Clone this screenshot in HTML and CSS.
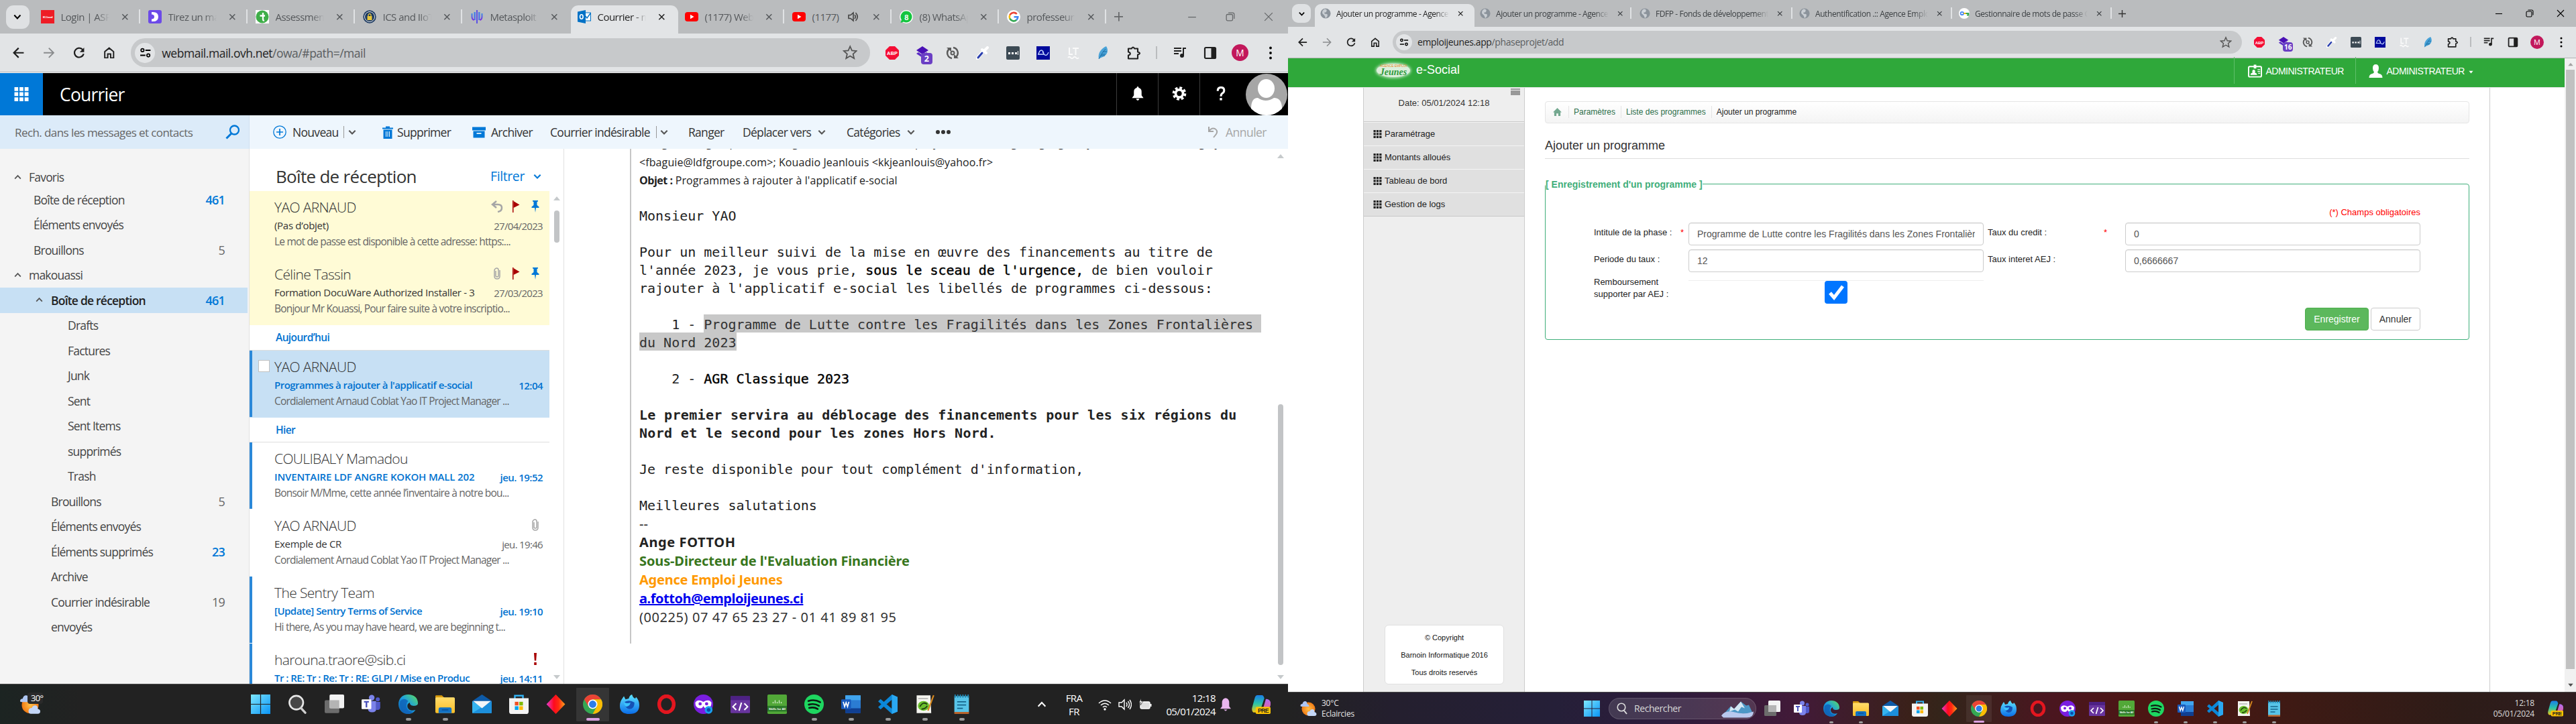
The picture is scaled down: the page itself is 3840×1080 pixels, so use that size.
FILE: index.html
```html
<!DOCTYPE html>
<html lang="fr">
<head>
<meta charset="utf-8">
<title>Courrier / e-Social</title>
<link rel="stylesheet" href="styles.css">
</head>
<body>
<svg class="defs" width="0" height="0">
<defs>
<linearGradient id="gWin" x1="0" y1="0" x2="1" y2="1"><stop offset="0" stop-color="#7ee8ff"/><stop offset="1" stop-color="#0a94f5"/></linearGradient>
<linearGradient id="gDia"><stop offset="0" stop-color="#e63bd0"/><stop offset=".4" stop-color="#ff0a1e"/><stop offset=".65" stop-color="#ff2a10"/><stop offset="1" stop-color="#ffa51e"/></linearGradient>
<linearGradient id="gEdge" x1="0" y1="1" x2="1" y2="0"><stop offset="0" stop-color="#0c59a4"/><stop offset=".5" stop-color="#1b9de2"/><stop offset="1" stop-color="#5fe05a"/></linearGradient>
<linearGradient id="gFold" x1="0" y1="0" x2="0" y2="1"><stop offset="0" stop-color="#ffdc6b"/><stop offset="1" stop-color="#fbbd26"/></linearGradient>
<linearGradient id="gFox" x1="0" y1="0" x2="0" y2="1"><stop offset="0" stop-color="#5fe6ff"/><stop offset="1" stop-color="#0a6ce8"/></linearGradient>
<linearGradient id="gCop" x1="0" y1="0" x2="0" y2="1"><stop offset="0" stop-color="#1b7ee8"/><stop offset=".5" stop-color="#2bc4a8"/><stop offset="1" stop-color="#f2c811"/></linearGradient>
<linearGradient id="gCop2" x1="0" y1="0" x2="0" y2="1"><stop offset="0" stop-color="#b06cf5"/><stop offset="1" stop-color="#f2607a"/></linearGradient>
<linearGradient id="gMeta" x1="0" y1="0" x2="0" y2="1"><stop offset="0" stop-color="#2aa5e8"/><stop offset="1" stop-color="#7a2be0"/></linearGradient>
<radialGradient id="gSun"><stop offset="0" stop-color="#ffc04a"/><stop offset="1" stop-color="#f07a14"/></radialGradient>
</defs>
<symbol id="chev" viewBox="0 0 12 12"><path d="M2 4l4 4.200L10 4" fill="none" stroke="currentColor" stroke-width="1.800"/></symbol>
<symbol id="up" viewBox="0 0 12 12"><path d="M2 8l4-4.200L10 8" fill="none" stroke="currentColor" stroke-width="1.600"/></symbol>
<symbol id="x" viewBox="0 0 12 12"><path d="M1.500 1.500l9 9M10.500 1.500l-9 9" fill="none" stroke="currentColor" stroke-width="1.700"/></symbol>
<symbol id="winx" viewBox="0 0 12 12"><path d="M1 1l10 10M11 1L1 11" fill="none" stroke="currentColor" stroke-width="1.100"/></symbol>
<symbol id="winmin" viewBox="0 0 12 12"><path d="M1 6.500h10" stroke="currentColor" stroke-width="1.100"/></symbol>
<symbol id="winmax" viewBox="0 0 12 12"><path d="M1 4.500Q1 3 2.500 3H7.500Q9 3 9 4.500V9.500Q9 11 7.500 11H2.500Q1 11 1 9.500zM3.500 1H9Q11 1 11 3V8.500" fill="none" stroke="currentColor" stroke-width="1.100"/></symbol>
<symbol id="plus" viewBox="0 0 12 12"><path d="M6 0v12M0 6h12" stroke="currentColor" stroke-width="1.500"/></symbol>
<symbol id="back" viewBox="0 0 16 16"><path d="M15 8H2M8 1.500L1.500 8 8 14.500" fill="none" stroke="currentColor" stroke-width="2"/></symbol>
<symbol id="fwd" viewBox="0 0 16 16"><path d="M1 8h13M8 1.500L14.500 8 8 14.500" fill="none" stroke="currentColor" stroke-width="1.700"/></symbol>
<symbol id="reload" viewBox="0 0 16 16"><path d="M13.500 4.500A6.300 6.300 0 1 0 14.300 9.300" fill="none" stroke="currentColor" stroke-width="2"/><path d="M15 1v6H9z" fill="currentColor"/></symbol>
<symbol id="home" viewBox="0 0 16 16"><path d="M2 6.500L8 1.500l6 5V15H10V9.500H6V15H2z" fill="none" stroke="currentColor" stroke-width="1.800"/></symbol>
<symbol id="tune" viewBox="0 0 16 16"><circle cx="4" cy="4.500" r="2" fill="none" stroke="currentColor" stroke-width="1.600"/><path d="M8 4.500h7M1 11.500h7" stroke="currentColor" stroke-width="1.800"/><circle cx="12" cy="11.500" r="2" fill="none" stroke="currentColor" stroke-width="1.600"/></symbol>
<symbol id="star" viewBox="0 0 20 20"><path d="M10 2l2.400 5.500 6 .5-4.500 4 1.400 5.900L10 14.700 4.700 17.900 6.100 12 1.600 8l6-.5z" fill="none" stroke="currentColor" stroke-width="1.600"/></symbol>
<symbol id="abp" viewBox="0 0 20 20"><path d="M6 0h8l6 6v8l-6 6H6l-6-6V6z" fill="#f40d34"/><text x="10" y="13.300" class="abp-t">ABP</text></symbol>
<symbol id="layers" viewBox="0 0 20 20"><path d="M10 0l9 6-9 6-9-6z" fill="#4a10b5"/><path d="M1 11l9 6 9-6-3-2-6 4-6-4z" fill="#5a2cc5"/></symbol>
<symbol id="sync" viewBox="0 0 20 20"><path d="M9 18A8 8 0 0 1 5 4M11 2a8 8 0 0 1 4 14" fill="none" stroke="#5a5a5a" stroke-width="2.400"/><path d="M1 2h7v6zM19 18h-7v-6z" fill="#5a5a5a"/><circle cx="10" cy="10" r="2.500" fill="none" stroke="#5a5a5a" stroke-width="2"/></symbol>
<symbol id="dropper" viewBox="0 0 20 20"><path d="M2 18l9-11" stroke="#fff" stroke-width="5" stroke-linecap="round"/><path d="M3 17l6-7" stroke="#2a3fae" stroke-width="3" stroke-linecap="round"/><path d="M9 5l6 5M12 7l5-5" stroke="#fff" stroke-width="4" stroke-linecap="round"/></symbol>
<symbol id="dots3" viewBox="0 0 20 20"><rect width="20" height="20" rx="2" fill="#3c4a54"/><path d="M3 9h3v3H3zM8 9h3v3H8zM13 9h3v3h-3zM17 7h1v6h-1z" fill="#fff"/></symbol>
<symbol id="wave" viewBox="0 0 20 20"><rect width="20" height="20" fill="#000a9c"/><path d="M2 12h9c-1-8-6-8-8 0M9 8c3 6 6 8 9 1" fill="none" stroke="#c8d8ff" stroke-width="1.300"/></symbol>
<symbol id="lt" viewBox="0 0 20 20"><path d="M4 2v10h5M9 3h9M13.500 3v10M2 17q2-2.500 4 0t4 0 4 0 4 0" fill="none" stroke="#fafafa" stroke-width="2"/></symbol>
<symbol id="feather" viewBox="0 0 20 20"><path d="M3 19C1 10 7 3 14 0c4 6 2 13-5 16-2 1-4 1-6 3z" fill="#4aa3d8"/><path d="M3 19Q8 9 13 4M7 12h6M6 14h6M9 8h6" stroke="#1d6ea5" stroke-width="1" fill="none"/></symbol>
<symbol id="puzzle" viewBox="0 0 20 20"><path d="M2 3.500h5q.5-2 2-2t2 2h5v5q3 .5 3 2t-3 2v6H2v-5q2.800-.5 2.800-2.500T2 8.500z" fill="none" stroke="#1f1f1f" stroke-width="2.100" stroke-linejoin="round"/></symbol>
<symbol id="queue" viewBox="0 0 20 20"><path d="M1 3h11M1 7h11M1 11h7" stroke="#1f1f1f" stroke-width="2"/><path d="M15 14V3h4" fill="none" stroke="#1f1f1f" stroke-width="2"/><circle cx="13" cy="14" r="3" fill="#1f1f1f"/></symbol>
<symbol id="panel" viewBox="0 0 20 20"><rect x="2" y="2" width="16" height="16" rx="1.500" fill="none" stroke="#1f1f1f" stroke-width="2.200"/><path d="M11.500 2H18v16h-6.500z" fill="#1f1f1f"/></symbol>
<symbol id="kebab" viewBox="0 0 20 20"><circle cx="10" cy="2.500" r="1.900"/><circle cx="10" cy="10" r="1.900"/><circle cx="10" cy="17.500" r="1.900"/></symbol>
<!-- favicons -->
<symbol id="f-ec" viewBox="0 0 20 20"><rect width="20" height="20" fill="#ee1c25"/><text x="10" y="12" class="ec-t">EC-Council</text></symbol>
<symbol id="f-d" viewBox="0 0 20 20"><rect width="20" height="20" rx="3" fill="#6c4ae8"/><path d="M5 3q10-1 10 7T5 17v-3.500q4 0 4-3.500T5 6.500z" fill="#fff"/></symbol>
<symbol id="f-t" viewBox="0 0 20 20"><rect width="20" height="20" fill="#fff"/><circle cx="10" cy="10" r="9.500" fill="#3fae49"/><path d="M11 4v10q0 2 2 1.500M6.500 8.500H14" fill="none" stroke="#fff" stroke-width="2.300"/></symbol>
<symbol id="f-ics" viewBox="0 0 20 20"><circle cx="10" cy="10" r="9.700" fill="#1c3a63"/><circle cx="10" cy="10" r="7.500" fill="none" stroke="#e8e8e8" stroke-width="1"/><rect x="6.500" y="9" width="7" height="6" fill="#e8c63a"/><path d="M8 9V7q2-3 4 0v2" fill="none" stroke="#e8c63a" stroke-width="1.300"/></symbol>
<symbol id="f-meta" viewBox="0 0 20 20"><path d="M6.500 3v12M13.500 3v12M2.500 5v5q0 4 3 5M17.500 5v5q0 4-3 5" fill="none" stroke="url(#gMeta)" stroke-width="2"/><path d="M6 3h1.800v12H6zM12.200 3H14v12h-1.800z" fill="#4a7be5"/><path d="M9 0h2v20H9z" fill="#5a50e5"/></symbol>
<symbol id="f-owa" viewBox="0 0 20 20"><path d="M10 4h9.500v12H10z" fill="#fff" stroke="#0072c6" stroke-width="1.200"/><path d="M11 8l3 4 5-7" fill="none" stroke="#0072c6" stroke-width="1.400"/><path d="M0 2.500L12 0v20L0 17.500z" fill="#0072c6"/><ellipse cx="5.800" cy="10" rx="2.300" ry="3.200" fill="none" stroke="#fff" stroke-width="1.600"/></symbol>
<symbol id="f-yt" viewBox="0 0 20 20"><rect y="3" width="20" height="14" rx="4" fill="#f00"/><path d="M8 6.800l5.500 3.200L8 13.200z" fill="#fff"/></symbol>
<symbol id="f-wa" viewBox="0 0 20 20"><circle cx="10" cy="10" r="10" fill="#fff"/><path d="M10 1.500a8.500 8.500 0 1 1-4 16L1.500 19l1.300-4.500A8.500 8.500 0 0 1 10 1.500z" fill="#14c53f"/><text x="10" y="14.500" class="wa-t">8</text></symbol>
<symbol id="f-g" viewBox="0 0 20 20"><circle cx="10" cy="10" r="10" fill="#fff"/><path d="M14.800 5.800A6.500 6.500 0 0 0 4.300 7.500" fill="none" stroke="#ea4335" stroke-width="2.600"/><path d="M4.300 7.500a6.500 6.500 0 0 0 0 5.200" fill="none" stroke="#fbbc05" stroke-width="2.600"/><path d="M4.300 12.700a6.500 6.500 0 0 0 10 2.100" fill="none" stroke="#34a853" stroke-width="2.600"/><path d="M14.300 14.800q2-1.800 2-4.500H10.500" fill="none" stroke="#4285f4" stroke-width="2.600"/></symbol>
<symbol id="f-globe" viewBox="0 0 20 20"><circle cx="10" cy="10" r="9.500" fill="#8b939b"/><path d="M8 2q5 0 4 3.500T8 8q-1 3 3 3t2 5l-3 3q-1-4-2-5T4 10Q3 5 8 2z" fill="#c9ced3"/></symbol>
<symbol id="f-key" viewBox="0 0 20 20"><circle cx="10" cy="10" r="10" fill="#fff"/><circle cx="6" cy="10" r="2.800" fill="none" stroke="#4285f4" stroke-width="2.200"/><path d="M9 10h5" stroke="#fbbc05" stroke-width="2.500"/><path d="M13 10h5v3h-3" fill="none" stroke="#34a853" stroke-width="2.500"/></symbol>
<!-- taskbar -->
<symbol id="t-win" viewBox="0 0 24 24"><path d="M0 0h11.500v11.500H0zM12.500 0H24v11.500H12.500zM0 12.500h11.500V24H0zM12.500 12.500H24V24H12.500z" fill="url(#gWin)"/></symbol>
<symbol id="t-search" viewBox="0 0 24 24"><circle cx="10.500" cy="10" r="8.500" fill="#474747" stroke="#e6e6e6" stroke-width="2.200"/><path d="M16 16.500l5.500 6" stroke="#cfcfcf" stroke-width="2.800" stroke-linecap="round"/></symbol>
<symbol id="t-task" viewBox="0 0 24 24"><rect y="7" width="18" height="16" rx="1.500" fill="#6c6c6c"/><rect x="6" y="0" width="18" height="17" rx="1.500" fill="#f2f2f2"/><path d="M6 7h12v10H6z" fill="#b4b4b4"/></symbol>
<symbol id="t-teams" viewBox="0 0 24 24"><circle cx="12.500" cy="4" r="3.500" fill="#7b83eb"/><circle cx="20" cy="6" r="2.500" fill="#5059c9"/><path d="M8 8h10v10q0 4-5 4t-5-4z" fill="#7b83eb"/><path d="M18 9h5v7q0 3-3 3h-2z" fill="#5059c9"/><rect x="0" y="6" width="12" height="12" rx="1" fill="#fff"/><path d="M3 9h6M6 9v7" stroke="#4b53bc" stroke-width="2"/></symbol>
<symbol id="t-edge" viewBox="0 0 24 24"><path d="M24 11C24 4 19 0 12 0S0 5 0 12s5 12 12 12c4 0 7-2 9-5-6 2-10-1-10-5 0-2 1-3 3-4 0 3 2 4 5 4s5-1 5-3z" fill="url(#gEdge)"/><path d="M2 8q5-5 10 0-3 3-2 8t8 5q-3 3-7 3Q0 22 2 8z" fill="#0f63b8" opacity=".85"/></symbol>
<symbol id="t-fold" viewBox="0 0 24 24"><path d="M0 2q0-1 1-1h7l3 3v4H0z" fill="#d89a0c"/><rect y="3.500" width="24" height="19.500" rx="1.500" fill="url(#gFold)"/><path d="M4 23v-5q0-2 2-2h12q2 0 2 2v5z" fill="#1272c4"/><path d="M8 19h8" stroke="#0b4f94" stroke-width="1.300"/></symbol>
<symbol id="t-mail" viewBox="0 0 24 24"><path d="M0 8l12-8 12 8v4H0z" fill="#0d5aa7"/><path d="M0 8l24 15H0z" fill="#35b4f0"/><path d="M24 8v15H0z" fill="#1c8fdc"/><path d="M1 8h22l-11 9z" fill="#f4f6f8"/></symbol>
<symbol id="t-store" viewBox="0 0 24 24"><path d="M7 6V1.500h10V6" fill="none" stroke="#31b1f2" stroke-width="2"/><path d="M0 4.500h24V21q0 3-3 3H3q-3 0-3-3z" fill="#f3f3f3"/><path d="M7 9h4.500v4.500H7z" fill="#f25022"/><path d="M12.500 9H17v4.500h-4.500z" fill="#7fba00"/><path d="M7 14.500h4.500V19H7z" fill="#00a4ef"/><path d="M12.500 14.500H17V19h-4.500z" fill="#ffb900"/></symbol>
<symbol id="t-dia" viewBox="0 0 24 24"><path d="M12 0l11.500 12L12 24 .5 12z" fill="url(#gDia)"/></symbol>
<symbol id="t-chrome" viewBox="0 0 24 24"><circle cx="12" cy="12" r="12" fill="#34a853"/><path d="M1.600 6A12 12 0 0 1 22.400 6H12L7 15z" fill="#ea4335"/><path d="M22.400 6A12 12 0 0 1 12 24l5-9-5-9z" fill="#fbbc05"/><circle cx="12" cy="12" r="5.800" fill="#fff"/><circle cx="12" cy="12" r="4.500" fill="#2b7de9"/></symbol>
<symbol id="t-fox" viewBox="0 0 24 24"><path d="M3 5l2-3 2 4 4-1q1-4 4-5 1 4 4 5l1-2q4 4 4 10 0 11-12 11T0 14Q0 9 3 5z" fill="url(#gFox)"/><path d="M6 9q6-3 12 1 0 8-6 8-6-1-6-9z" fill="#1552b5"/><path d="M5 9q4 3 8 1 0 4-5 5-3-2-3-6z" fill="#3bc4ff"/></symbol>
<symbol id="t-opera" viewBox="0 0 24 24"><ellipse cx="12" cy="12" rx="9" ry="10" fill="none" stroke="#e3161f" stroke-width="4.500"/></symbol>
<symbol id="t-mask" viewBox="0 0 24 24"><circle cx="12" cy="12" r="12" fill="#7a1ee0"/><path d="M2 10q3-5 10-1 7-4 10 1 0 7-6 7-3 0-4-3-1 3-4 3-6 0-6-7z" fill="#fff"/><circle cx="8" cy="11.500" r="2" fill="#7a1ee0"/><circle cx="16" cy="11.500" r="2" fill="#7a1ee0"/><circle cx="18.500" cy="19" r="4.800" fill="#19a0f0"/><circle cx="18.500" cy="19" r="2.300" fill="#0b4aa8"/></symbol>
<symbol id="t-code" viewBox="0 0 24 24"><rect y="2" width="24" height="21" rx="1" fill="#68349e"/><path d="M0 2h24v5H0z" fill="#4d2184"/><path d="M7 11l-4 4 4 4M17 11l4 4-4 4M13.500 10l-3 10" fill="none" stroke="#fff" stroke-width="1.700"/></symbol>
<symbol id="t-cisco" viewBox="0 0 24 24"><rect width="24" height="24" rx="1.500" fill="#52a838"/><path d="M0 14h24v7H0z" fill="#2c7a2a"/><path d="M7 9v2M9.500 7v4M12 9v2M14.500 7v4M17 9v2" stroke="#d8efd0"/><text x="12" y="19" class="ci-t">Skills for All</text></symbol>
<symbol id="t-spot" viewBox="0 0 24 24"><circle cx="12" cy="12" r="12" fill="#1ed760"/><path d="M5 8q8-2.500 14.500 1.500M5.500 12.500q7-2 12.500 1.500M6 16.500q6-1.500 10.500 1.300" fill="none" stroke="#0c1c12" stroke-width="2.200" stroke-linecap="round"/></symbol>
<symbol id="t-word" viewBox="0 0 24 24"><rect x="5" y="1" width="19" height="22" rx="1.500" fill="#2b7cd3"/><path d="M5 1h19v6H5z" fill="#41a5ee"/><path d="M5 17h19v6H5z" fill="#103f91"/><rect y="6" width="12" height="12" rx="1" fill="#185abd"/><path d="M2.500 9l1.700 6L6 10l1.800 5 1.700-6" fill="none" stroke="#fff" stroke-width="1.400"/></symbol>
<symbol id="t-vs" viewBox="0 0 24 24"><path d="M17 0l7 3v18l-7 3L0 8.500 3 5.500l14 12V6.500L3 18.500l-3-3L17 0z" fill="#0b87d8"/><path d="M17 0l7 3v18l-7 3z" fill="#2aa8f2"/></symbol>
<symbol id="t-npp" viewBox="0 0 24 24"><path d="M2 1h17l1 22H2z" fill="#f5f5f0"/><path d="M4 5h12" stroke="#999"/><ellipse cx="10.500" cy="14" rx="7" ry="6" fill="#6bc02c"/><path d="M6 15q4-7 9-3M8 18q5 0 7-4" fill="none" stroke="#1f3d10" stroke-width="1.500"/><path d="M23 1l-7 19" stroke="#d88a20" stroke-width="1.800"/></symbol>
<symbol id="t-note" viewBox="0 0 24 24"><rect x="3" y="2" width="18" height="20" fill="#58c4e8"/><path d="M3 21.500h18V24H3z" fill="#b8642c"/><path d="M4 0v4M7.200 0v4M10.400 0v4M13.600 0v4M16.800 0v4M20 0v4" stroke="#1d87b5" stroke-width="1.500"/><path d="M6.500 9h11M6.500 13h11M6.500 17h7" stroke="#16658c" stroke-width="1.500"/></symbol>
<symbol id="t-cop" viewBox="0 0 24 24"><path d="M7 0h6q2 0 3 4l-5 15q-1 3-4 3H2q-3-2-1-8L4 3q1-3 3-3z" fill="url(#gCop)"/><path d="M13 22l5-17q5 0 6 4t-3 11q-1 2-4 2z" fill="url(#gCop2)"/><rect x="5" y="15" width="19" height="9" rx="1.500" fill="#ffc400"/><text x="14.500" y="22.300" class="pre-t">PRE</text></symbol>
<symbol id="t-sun" viewBox="0 0 24 24"><circle cx="12" cy="12.500" r="10" fill="url(#gSun)"/><path d="M0 8q0-3 3-3Q4 1 7 1t3 4q3 1 3 4H2Q0 9 0 8z" fill="#aec6f2"/><path d="M10 20q0-4 4-4 1-3 4-3t3 4q3 1 3 3 0 3-3 3h-8q-3 0-3-3z" fill="#c3d6f7"/></symbol>
<symbol id="flag" viewBox="0 0 12 18"><path d="M1 0h1.500v18H1z" fill="#a80000"/><path d="M2.500 1L11.500 6.500 2.500 11z" fill="#a80000"/></symbol>
<symbol id="pin" viewBox="0 0 12 18"><path d="M2 0h8v1.500L8.500 2v5l3 2.500V11H7l-1 7-1-7H.5V9.500l3-2.500V2L2 1.500z" fill="#0078d7"/></symbol>
<symbol id="clip" viewBox="0 0 12 18"><path d="M4 5v7.500q0 1.500 2 1.500t2-1.500V4Q8 1 5.500 1T2 4v9q0 4 4 4t4-4V4" fill="none" stroke="#a6a6a6" stroke-width="1.500"/></symbol>
<symbol id="reply" viewBox="0 0 18 18"><path d="M8 1L2 6l6 5M2.500 6H10q6 0 6 5t-6 6" fill="none" stroke="#a6a6a6" stroke-width="2.500"/></symbol>
<symbol id="grid9" viewBox="0 0 13 13"><path d="M0 0h3.500v3.500H0zM4.700 0h3.500v3.500H4.700zM9.400 0H13v3.500H9.400zM0 4.700h3.500v3.500H0zM4.700 4.700h3.500v3.500H4.700zM9.400 4.700H13v3.500H9.400zM0 9.400h3.500V13H0zM4.700 9.400h3.500V13H4.700zM9.400 9.400H13V13H9.400z" fill="currentColor"/></symbol>
<symbol id="tri-up" viewBox="0 0 10 8"><path d="M5 1l5 6H0z" fill="currentColor"/></symbol>
<symbol id="tri-dn" viewBox="0 0 10 8"><path d="M5 7l5-6H0z" fill="currentColor"/></symbol>
</svg>

<div class="desktop">
<!-- ============ mail monitor ============ -->
<section class="screen mail">
  <div class="tabs">
    <span class="tabmenu"><svg><use href="#chev"/></svg></span>
    <div class="tab"><svg class="fav"><use href="#f-ec"/></svg><span>Login | ASPEN</span><svg class="cl"><use href="#x"/></svg></div>
    <div class="tab"><svg class="fav"><use href="#f-d"/></svg><span>Tirez un maximum</span><svg class="cl"><use href="#x"/></svg></div>
    <div class="tab"><svg class="fav"><use href="#f-t"/></svg><span>Assessment</span><svg class="cl"><use href="#x"/></svg></div>
    <div class="tab"><svg class="fav"><use href="#f-ics"/></svg><span>ICS and IIoT</span><svg class="cl"><use href="#x"/></svg></div>
    <div class="tab nosep"><svg class="fav"><use href="#f-meta"/></svg><span>Metasploit |</span><svg class="cl"><use href="#x"/></svg></div>
    <div class="tab on"><svg class="fav"><use href="#f-owa"/></svg><span>Courrier - ma</span><svg class="cl"><use href="#x"/></svg></div>
    <div class="tab"><svg class="fav"><use href="#f-yt"/></svg><span>(1177) Web</span><svg class="cl"><use href="#x"/></svg></div>
    <div class="tab snd"><svg class="fav"><use href="#f-yt"/></svg><span>(1177) </span><svg class="spk" viewBox="0 0 16 16"><path d="M1 5.500h3L8 2v12l-4-3.500H1zM10 5q2.500 3 0 6M11.500 2q5.500 6 0 12" fill="none" stroke="#444" stroke-width="1.600"/></svg><svg class="cl"><use href="#x"/></svg></div>
    <div class="tab"><svg class="fav"><use href="#f-wa"/></svg><span>(8) WhatsApp</span><svg class="cl"><use href="#x"/></svg></div>
    <div class="tab"><svg class="fav"><use href="#f-g"/></svg><span>professeur</span><svg class="cl"><use href="#x"/></svg></div>
    <svg class="newtab"><use href="#plus"/></svg>
    <div class="winbtns"><svg><use href="#winmin"/></svg><svg><use href="#winmax"/></svg><svg><use href="#winx"/></svg></div>
  </div>
  <div class="toolbar">
    <div class="nav"><svg><use href="#back"/></svg><svg class="dim"><use href="#fwd"/></svg><svg><use href="#reload"/></svg><svg><use href="#home"/></svg></div>
    <div class="omni"><span class="site"><svg><use href="#tune"/></svg></span><span class="url">webmail.mail.ovh.net<i>/owa/#path=/mail</i></span><svg class="star"><use href="#star"/></svg></div>
    <div class="exts">
      <span><svg><use href="#abp"/></svg></span><span><svg><use href="#layers"/></svg><b>2</b></span><span><svg><use href="#sync"/></svg></span><span><svg><use href="#dropper"/></svg></span><span><svg><use href="#dots3"/></svg></span><span><svg><use href="#wave"/></svg></span><span><svg><use href="#lt"/></svg></span><span><svg><use href="#feather"/></svg></span><span><svg><use href="#puzzle"/></svg></span>
      <span class="bar"></span>
      <span><svg><use href="#queue"/></svg></span><span><svg><use href="#panel"/></svg></span><span><em>M</em></span><span><svg><use href="#kebab"/></svg></span>
    </div>
  </div>
  <header class="owa-head">
    <div class="launcher"><svg><use href="#grid9"/></svg></div>
    <h1>Courrier</h1>
    <div class="head-icons">
      <span><svg viewBox="0 0 20 22"><path d="M10 0q1.500 0 1.500 2Q16 3 16 8v6l3 4H1l3-4V8q0-5 4.500-6Q8.500 0 10 0zM7.500 19h5q-.5 3-2.500 3t-2.500-3z" fill="#fff"/></svg></span>
      <span><svg viewBox="0 0 22 22"><circle cx="11" cy="11" r="5.800" fill="none" stroke="#fff" stroke-width="4"/><circle cx="11" cy="11" r="9" fill="none" stroke="#fff" stroke-width="3.600" stroke-dasharray="4 3.070"/></svg></span>
      <span><svg viewBox="0 0 16 22"><path d="M3 7q0-5.500 5-5.500t5 4.500q0 3-2.500 4.500T8 15.500" fill="none" stroke="#fff" stroke-width="3.200"/><path d="M6.200 18h3.600v3.600H6.200z" fill="#fff"/></svg></span>
    </div>
    <svg class="avatar" viewBox="0 0 62 62"><circle cx="31" cy="31" r="31" fill="#a6a6a6"/><ellipse cx="30.500" cy="22" rx="12.500" ry="14" fill="#fff"/><path d="M8 52q0-16 10-16 12 8 24 0 12 0 12 16-10 10-23 10T8 52z" fill="#fff"/></svg>
  </header>
  <div class="actions">
    <div class="search"><span>Rech. dans les messages et contacts</span><svg viewBox="0 0 22 22"><circle cx="13.500" cy="8" r="6.500" fill="none" stroke="#0078d7" stroke-width="2.300"/><path d="M9 13L1.500 20.500" stroke="#0078d7" stroke-width="3"/></svg></div>
    <div class="cmds">
      <svg class="ic" viewBox="0 0 20 20"><circle cx="10" cy="10" r="9.200" fill="none" stroke="#0078d7" stroke-width="1.300"/><path d="M10 5v10M5 10h10" stroke="#0078d7" stroke-width="1.700"/></svg><span>Nouveau</span><span class="pipe"></span><svg class="cv"><use href="#chev"/></svg>
      <svg class="ic" viewBox="0 0 20 20"><path d="M2 3.500h16v2H2zM7 1.500h6v2H7zM3.500 6.500h13V20h-13z" fill="#0078d7"/><path d="M7.500 9v8M10 9v8M12.500 9v8" stroke="#eef6fd"/></svg><span>Supprimer</span>
      <svg class="ic" viewBox="0 0 20 20"><path d="M0 2.500h20v5H0zM1.500 8.500h17v10h-17z" fill="#0078d7"/><path d="M6.500 12h7" stroke="#eef6fd" stroke-width="1.800"/></svg><span>Archiver</span>
      <span>Courrier indésirable</span><span class="pipe"></span><svg class="cv"><use href="#chev"/></svg>
      <span>Ranger</span><span>Déplacer vers</span><svg class="cv"><use href="#chev"/></svg><span>Catégories</span><svg class="cv"><use href="#chev"/></svg><span class="more"><i></i><i></i><i></i></span>
    </div>
    <div class="undo"><svg viewBox="0 0 18 18"><path d="M3 1v7h7M3 8q4-6 9-4 5 3 2 8l-4 5" fill="none" stroke="#a6a6a6" stroke-width="2"/></svg><span>Annuler</span></div>
  </div>
  <div class="owa-body">
    <nav class="folders">
      <div class="l0 first"><svg><use href="#up"/></svg>Favoris</div>
      <div class="fv">Boîte de réception<b>461</b></div>
      <div class="fv">Éléments envoyés</div>
      <div class="fv">Brouillons<i>5</i></div>
      <div class="l0"><svg><use href="#up"/></svg>makouassi</div>
      <div class="l1 sel"><svg><use href="#up"/></svg>Boîte de réception<b>461</b></div>
      <div class="l2">Drafts</div>
      <div class="l2">Factures</div>
      <div class="l2">Junk</div>
      <div class="l2">Sent</div>
      <div class="l2">Sent Items</div>
      <div class="l2">supprimés</div>
      <div class="l2">Trash</div>
      <div class="l1">Brouillons<i>5</i></div>
      <div class="l1">Éléments envoyés</div>
      <div class="l1">Éléments supprimés<b>23</b></div>
      <div class="l1">Archive</div>
      <div class="l1">Courrier indésirable<i>19</i></div>
      <div class="l1">envoyés</div>
    </nav>
    <section class="list">
      <div class="list-head"><h2>Boîte de réception</h2><span>Filtrer</span><svg><use href="#chev"/></svg></div>
      <div class="list-scroll">
        <div class="msgs">
          <article class="msg pinned"><div class="r1">YAO ARNAUD<svg class="w"><use href="#reply"/></svg><svg><use href="#flag"/></svg><svg><use href="#pin"/></svg></div><div class="r2"><span>(Pas d’objet)</span><time>27/04/2023</time></div><p>Le mot de passe est disponible à cette adresse: https:...</p></article>
          <article class="msg pinned"><div class="r1">Céline Tassin<svg class="w"><use href="#clip"/></svg><svg><use href="#flag"/></svg><svg><use href="#pin"/></svg></div><div class="r2"><span>Formation DocuWare Authorized Installer - 3</span><time>27/03/2023</time></div><p>Bonjour Mr Kouassi, Pour faire suite à votre inscriptio...</p></article>
          <div class="day">Aujourd’hui</div>
          <article class="msg unread cur"><span class="cb"></span><div class="r1">YAO ARNAUD</div><div class="r2"><span>Programmes à rajouter à l'applicatif e-social</span><time>12:04</time></div><p>Cordialement Arnaud Coblat Yao IT Project Manager ...</p></article>
          <div class="day">Hier</div>
          <article class="msg unread"><div class="r1">COULIBALY Mamadou</div><div class="r2"><span class="wide">INVENTAIRE LDF ANGRE KOKOH MALL 2023</span><time>jeu. 19:52</time></div><p>Bonsoir M/Mme, cette année l’inventaire à notre bou...</p></article>
          <article class="msg"><div class="r1">YAO ARNAUD<svg><use href="#clip"/></svg></div><div class="r2"><span>Exemple de CR</span><time>jeu. 19:46</time></div><p>Cordialement Arnaud Coblat Yao IT Project Manager ...</p></article>
          <article class="msg unread"><div class="r1">The Sentry Team</div><div class="r2"><span>[Update] Sentry Terms of Service</span><time>jeu. 19:10</time></div><p>Hi there, As you may have heard, we are beginning t...</p></article>
          <article class="msg unread"><div class="r1">harouna.traore@sib.ci<svg viewBox="0 0 12 18"><path d="M4 0h4l-.8 11.500H4.800zM4.200 14h3.600v4H4.200z" fill="#a80000"/></svg></div><div class="r2"><span>Tr : RE: Tr : Re: Tr : RE: GLPI / Mise en Produc</span><time>jeu. 14:11</time></div></article>
        </div>
        <div class="sb sb-list"><svg><use href="#tri-up"/></svg><span></span><svg class="dn"><use href="#tri-dn"/></svg></div>
      </div>
    </section>
    <main class="reader">
      <div class="quote">
        <p class="hdr cut">&lt;fbaguie@ldfgroupe.com&gt;; Ange Fottoh &lt;a.fottoh@emploijeunes.ci&gt;; Gbogbo &lt;gbogbo@yahoo.fr&gt;; Koua &lt;ko_ag@yahoo.fr&gt;; Baguie</p>
        <p class="hdr">&lt;fbaguie@ldfgroupe.com&gt;; Kouadio Jeanlouis &lt;kkjeanlouis@yahoo.fr&gt;</p>
        <p class="hdr"><b>Objet :</b> Programmes à rajouter à l'applicatif e-social</p>
<pre>

Monsieur YAO

Pour un meilleur suivi de la mise en œuvre des financements au titre de
l'année 2023, je vous prie, <i>sous le sceau de l'urgence,</i> de bien vouloir
rajouter à l'applicatif e-social les libellés de programmes ci-dessous:

    1 - <mark>Programme de Lutte contre les Fragilités dans les Zones Frontalières </mark>
<mark>du Nord 2023</mark>

    2 - <i>AGR Classique 2023</i>

<b>Le premier servira au déblocage des financements pour les six régions du</b>
<b>Nord et le second pour les zones Hors Nord.</b>

Je reste disponible pour tout complément d'information,

Meilleures salutations
</pre>
        <div class="sig"><p class="dash">--</p><p class="s1">Ange FOTTOH</p><p class="s2">Sous-Directeur de l'Evaluation Financière</p><p class="s3">Agence Emploi Jeunes</p><p class="s4">a.fottoh@emploijeunes.ci</p><p class="s5">(00225) 07 47 65 23 27 - 01 41 89 81 95</p></div>
      </div>
      <div class="sb sb-read"><svg><use href="#tri-up"/></svg><span></span><svg class="dn"><use href="#tri-dn"/></svg></div>
    </main>
  </div>
  <footer class="task">
    <div class="weather"><svg><use href="#t-sun"/></svg><b>30°</b></div>
    <div class="apps">
      <span><svg><use href="#t-win"/></svg></span><span><svg><use href="#t-search"/></svg></span><span><svg><use href="#t-task"/></svg></span><span><svg><use href="#t-teams"/></svg></span><span class="run"><svg><use href="#t-edge"/></svg></span><span class="run"><svg><use href="#t-fold"/></svg></span><span><svg><use href="#t-mail"/></svg></span><span><svg><use href="#t-store"/></svg></span><span><svg><use href="#t-dia"/></svg></span><span class="act"><svg><use href="#t-chrome"/></svg></span><span><svg><use href="#t-fox"/></svg></span><span><svg><use href="#t-opera"/></svg></span><span><svg><use href="#t-mask"/></svg></span><span><svg><use href="#t-code"/></svg></span><span><svg><use href="#t-cisco"/></svg></span><span class="run"><svg><use href="#t-spot"/></svg></span><span class="run"><svg><use href="#t-word"/></svg></span><span class="run"><svg><use href="#t-vs"/></svg></span><span class="run"><svg><use href="#t-npp"/></svg></span><span class="run"><svg><use href="#t-note"/></svg></span>
    </div>
    <div class="tray">
      <svg class="tup"><use href="#up"/></svg>
      <div class="lang">FRA<br>FR</div>
      <svg class="ti" viewBox="0 0 20 20"><path d="M1 8q9-8 18 0M4 11q6-5.500 12 0M7 14q3-3 6 0" fill="none" stroke="#fff" stroke-width="1.600"/><circle cx="10" cy="17" r="1.700" fill="#fff"/></svg>
      <svg class="ti" viewBox="0 0 20 20"><path d="M1 7h4l4-4v14l-4-4H1zM12 7q2 3 0 6M14.500 5q4 5 0 10M17 3q5 7 0 14" fill="none" stroke="#fff" stroke-width="1.400"/></svg>
      <svg class="ti" viewBox="0 0 20 20"><rect x="3" y="6" width="14" height="10" rx="2" fill="#ddd" stroke="#fff" stroke-width="1.400"/><path d="M18.500 9v4" stroke="#fff" stroke-width="2"/><path d="M4 1L1 7h3l-1 4 4-6H4z" fill="#fff" stroke="#222" stroke-width=".6"/></svg>
      <div class="clock">12:18<br>05/01/2024</div>
      <svg class="tbell" viewBox="0 0 18 22"><path d="M9 0q6 1 6 8v6l3 4H0l3-4V8q0-7 6-8zM6 19.500h6L9 22z" fill="#e9b5ee"/></svg>
      <svg class="tcop"><use href="#t-cop"/></svg>
    </div>
  </footer>
</section>

<!-- ============ e-Social monitor ============ -->
<section class="screen social">
  <div class="tabs">
    <span class="tabmenu"><svg><use href="#chev"/></svg></span>
    <div class="tab on"><svg class="fav"><use href="#f-globe"/></svg><span>Ajouter un programme - Agence</span><svg class="cl"><use href="#x"/></svg></div>
    <div class="tab"><svg class="fav"><use href="#f-globe"/></svg><span>Ajouter un programme - Agence</span><svg class="cl"><use href="#x"/></svg></div>
    <div class="tab"><svg class="fav"><use href="#f-globe"/></svg><span>FDFP - Fonds de développement</span><svg class="cl"><use href="#x"/></svg></div>
    <div class="tab"><svg class="fav"><use href="#f-globe"/></svg><span>Authentification .:: Agence Emploi</span><svg class="cl"><use href="#x"/></svg></div>
    <div class="tab"><svg class="fav"><use href="#f-key"/></svg><span>Gestionnaire de mots de passe G</span><svg class="cl"><use href="#x"/></svg></div>
    <svg class="newtab"><use href="#plus"/></svg>
    <div class="winbtns"><svg><use href="#winmin"/></svg><svg><use href="#winmax"/></svg><svg><use href="#winx"/></svg></div>
  </div>
  <div class="toolbar">
    <div class="nav"><svg><use href="#back"/></svg><svg class="dim"><use href="#fwd"/></svg><svg><use href="#reload"/></svg><svg><use href="#home"/></svg></div>
    <div class="omni"><span class="site"><svg><use href="#tune"/></svg></span><span class="url">emploijeunes.app<i>/phaseprojet/add</i></span><svg class="star"><use href="#star"/></svg></div>
    <div class="exts">
      <span><svg><use href="#abp"/></svg></span><span><svg><use href="#layers"/></svg><b>16</b></span><span><svg><use href="#sync"/></svg></span><span><svg><use href="#dropper"/></svg></span><span><svg><use href="#dots3"/></svg></span><span><svg><use href="#wave"/></svg></span><span><svg><use href="#lt"/></svg></span><span><svg><use href="#feather"/></svg></span><span><svg><use href="#puzzle"/></svg></span>
      <span class="bar"></span>
      <span><svg><use href="#queue"/></svg></span><span><svg><use href="#panel"/></svg></span><span><em>M</em></span><span><svg><use href="#kebab"/></svg></span>
    </div>
  </div>
  <div class="viewport">
    <div class="site-page">
      <header class="es-head">
        <div class="logo"><small>AGENCE EMPLOI</small><b>Jeunes</b></div>
        <h1>e-Social</h1>
        <div class="user u1"><svg viewBox="0 0 22 20"><rect x="1" y="3" width="20" height="16" rx="2" fill="none" stroke="#fff" stroke-width="2"/><rect x="9" y="0" width="4" height="6" fill="#fff"/><path d="M4 16q0-3 3-3-1-5 2-5t2 5q3 0 3 3zM15 7h4v1.300h-4zM15 10h4v1.300h-4zM16 13h3v1.300h-3z" fill="#fff"/></svg>ADMINISTRATEUR</div>
        <div class="user u2"><svg viewBox="0 0 20 20"><path d="M10 0q4.500 0 4.500 5.500 0 4-2 6 .5 2 3 2.500 4.500 1 4.500 6H0q0-5 4.500-6 2.500-.5 3-2.500-2-2-2-6Q5.500 0 10 0z" fill="#fff"/></svg>ADMINISTRATEUR<svg class="caret"><use href="#tri-dn"/></svg></div>
      </header>
      <div class="es-body">
        <aside>
          <div class="date"><span class="tog"></span>Date: 05/01/2024 12:18</div>
          <ul>
            <li><svg><use href="#grid9"/></svg>Paramétrage</li>
            <li><svg><use href="#grid9"/></svg>Montants alloués</li>
            <li><svg><use href="#grid9"/></svg>Tableau de bord</li>
            <li><svg><use href="#grid9"/></svg>Gestion de logs</li>
          </ul>
          <div class="copy"><p>© Copyright</p><p>Barnoin Informatique 2016</p><p>Tous droits reservés</p></div>
        </aside>
        <main>
          <div class="crumbs"><svg viewBox="0 0 14 13"><path d="M7 0l7 7h-2v6H8.500V9h-3v4H2V7H0z" fill="#74a890"/></svg><a>Paramètres</a><a>Liste des programmes</a><span>Ajouter un programme</span></div>
          <h2>Ajouter un programme</h2>
          <fieldset>
            <legend>[ Enregistrement d'un programme ]</legend>
            <div class="req">(*) Champs obligatoires</div>
            <div class="frow"><label>Intitule de la phase :</label><s>*</s><div class="inp"><span>Programme de Lutte contre les Fragilités dans les Zones Frontalières du Nord 2023</span></div><label class="rl">Taux du credit :</label><s class="rs">*</s><div class="inp"><span>0</span></div></div>
            <div class="frow"><label>Periode du taux :</label><s></s><div class="inp"><span>12</span></div><label class="rl">Taux interet AEJ :</label><s class="rs"></s><div class="inp"><span>0,6666667</span></div></div>
            <div class="frow last"><label>Remboursement<br>supporter par AEJ :</label><s></s><div class="chk"><svg viewBox="0 0 34 34"><rect width="34" height="34" rx="4" fill="#0075ff"/><path d="M8 18l6 7L27 8" fill="none" stroke="#fff" stroke-width="5"/></svg></div></div>
            <div class="btns"><button class="ok">Enregistrer</button><button>Annuler</button></div>
          </fieldset>
        </main>
      </div>
    </div>
    <div class="vsb"><svg><use href="#tri-up"/></svg><span></span><svg class="dk"><use href="#tri-dn"/></svg></div>
  </div>
  <footer class="task">
    <div class="weather"><svg><use href="#t-sun"/></svg><p>30°C<br>Eclaircies</p></div>
    <div class="apps">
      <span><svg><use href="#t-win"/></svg></span>
      <div class="pill"><svg viewBox="0 0 16 20"><circle cx="7" cy="8" r="5.800" fill="none" stroke="#ddd" stroke-width="1.600"/><path d="M11 13l4 5" stroke="#ddd" stroke-width="2"/></svg>Rechercher<svg class="mt" viewBox="0 0 48 24"><path d="M4 18L14 7l5 4L29 0l8 6 4-1 6 13z" fill="#4d97c6"/><path d="M14 7l5 4L29 0l6 10-5-2-5 7-5-3-8 3z" fill="#d4e8f4"/><path d="M0 21q6-9 20-5t28-1q0 9-10 9H3z" fill="#b9c8ee"/></svg></div>
      <span><svg><use href="#t-task"/></svg></span><span><svg><use href="#t-teams"/></svg></span><span class="run"><svg><use href="#t-edge"/></svg></span><span class="run"><svg><use href="#t-fold"/></svg></span><span><svg><use href="#t-mail"/></svg></span><span><svg><use href="#t-store"/></svg></span><span><svg><use href="#t-dia"/></svg></span><span class="act"><svg><use href="#t-chrome"/></svg></span><span><svg><use href="#t-fox"/></svg></span><span><svg><use href="#t-opera"/></svg></span><span><svg><use href="#t-mask"/></svg></span><span><svg><use href="#t-code"/></svg></span><span><svg><use href="#t-cisco"/></svg></span><span class="run"><svg><use href="#t-spot"/></svg></span><span class="run"><svg><use href="#t-word"/></svg></span><span class="run"><svg><use href="#t-vs"/></svg></span><span class="run"><svg><use href="#t-npp"/></svg></span><span class="run"><svg><use href="#t-note"/></svg></span>
    </div>
    <div class="tray"><div class="clock">12:18<br>05/01/2024</div><svg class="tcop"><use href="#t-cop"/></svg></div>
  </footer>
</section>
</div>
</body>
</html>
```
FILE: styles.css
```css
* { box-sizing: border-box; margin: 0; padding: 0; }
body { width: 3840px; height: 1080px; overflow: hidden; background: #fff; font-family: "Segoe UI", "Open Sans", "Noto Sans", sans-serif; }
.defs { position: absolute; }
svg { display: block; flex: none; }
i, em, s { font-style: normal; text-decoration: none; }
.desktop { display: flex; }
.screen { width: 1920px; height: 1080px; display: flex; flex-direction: column; overflow: hidden; white-space: nowrap; }
.abp-t { font: bold 7.5px "Liberation Sans", sans-serif; fill: #fff; text-anchor: middle; }
.ec-t { font: bold 3.6px "Liberation Sans", sans-serif; fill: #fff; text-anchor: middle; }
.wa-t { font: bold 11px "Liberation Sans", sans-serif; fill: #fff; text-anchor: middle; }
.ci-t { font: bold 3.6px "Liberation Sans", sans-serif; fill: #fff; text-anchor: middle; }
.pre-t { font: bold 7.5px "Liberation Sans", sans-serif; fill: #222; text-anchor: middle; }

/* browser chrome: --u is the display scale of each monitor */
.mail { --u: 1.25px; }
.social { --u: 1px; }
.tabs { height: calc(40 * var(--u)); background: #babcbe; display: flex; align-items: center; padding-left: calc(6 * var(--u)); flex: none; }
.tabmenu { width: calc(28 * var(--u)); height: calc(28 * var(--u)); border-radius: calc(9 * var(--u)); background: #dfe1e3; display: flex; align-items: center; justify-content: center; margin-right: calc(6 * var(--u)); }
.tabmenu svg { width: calc(11 * var(--u)); height: calc(11 * var(--u)); }
.tab { position: relative; display: flex; align-items: center; height: calc(28 * var(--u)); font-size: calc(12 * var(--u)); color: #3c4043; padding-left: calc(8 * var(--u)); letter-spacing: -.035em; }
.mail .tab { width: 160px; color: #55585b; }
.mail .tabmenu { margin-left: 1px; margin-right: 7px; }
.social .tab { width: 238px; }
.tab::after { content: ""; position: absolute; right: 2px; top: calc(5 * var(--u)); width: 2px; height: calc(17 * var(--u)); background: #e0e2e4; }
.tab.on::after, .tab.nosep::after { display: none; }
.social .tab.on + .tab::after { right: 4px; }
.fav { width: calc(16 * var(--u)); height: calc(16 * var(--u)); }
.tab span { margin-left: calc(8 * var(--u)); width: calc(58 * var(--u)); overflow: hidden; -webkit-mask-image: linear-gradient(90deg, #000 75%, transparent); mask-image: linear-gradient(90deg, #000 75%, transparent); }
.social .tab span { width: 168px; -webkit-mask-image: linear-gradient(90deg, #000 88%, transparent); mask-image: linear-gradient(90deg, #000 88%, transparent); }
.cl { position: absolute; right: calc(15.500 * var(--u)); width: calc(8.500 * var(--u)); height: calc(8.500 * var(--u)); }
.social .cl { right: 17px; }
.mail .tab.on, .social .tab.on { height: calc(34 * var(--u)); align-self: flex-end; background: #e2e4e6; border-radius: calc(9 * var(--u)) calc(9 * var(--u)) 0 0; color: #1f1f1f; padding-bottom: calc(6 * var(--u)); }
.tab.snd span { width: 42px; -webkit-mask-image: none; mask-image: none; }
.spk { width: 16px; height: 16px; margin-left: 11px; }
.newtab { width: calc(11 * var(--u)); height: calc(11 * var(--u)); margin-left: calc(8 * var(--u)); color: #333; }
.winbtns { margin-left: auto; display: flex; }
.winbtns svg { width: 12px; height: 12px; margin-right: 34px; }
.winbtns svg:last-child { margin-right: 17px; }
.mail .winbtns, .mail .newtab { color: #66686a; }
.mail .winbtns svg { width: 14px; height: 14px; margin-right: 43px; }
.mail .winbtns svg:last-child { margin-right: 22px; }
.toolbar { height: calc(46.500 * var(--u)); background: #e2e4e6; border-bottom: 1px solid #b0b2b4; display: flex; align-items: center; flex: none; }
.nav { display: flex; gap: calc(22 * var(--u)); padding-left: calc(15 * var(--u)); width: calc(156 * var(--u)); color: #1f1f1f; }
.nav svg { width: calc(14 * var(--u)); height: calc(14 * var(--u)); }
.nav .dim { color: #8a8c8e; }
.omni { height: calc(34 * var(--u)); width: 1102px; border-radius: calc(17 * var(--u)); background: #c7c9cb; display: flex; align-items: center; padding-left: calc(5 * var(--u)); }
.social .omni { width: 1266px; }
.site { width: calc(24 * var(--u)); height: calc(24 * var(--u)); border-radius: 50%; background: #e2e4e6; display: flex; align-items: center; justify-content: center; }
.site svg { width: calc(14 * var(--u)); height: calc(14 * var(--u)); }
.url { font-size: calc(14 * var(--u)); letter-spacing: -.027em; margin-left: calc(8 * var(--u)); color: #1f1f1f; flex: 1; }
.url i { color: #5a5d60; }
.star { width: calc(18 * var(--u)); height: calc(18 * var(--u)); margin-right: calc(15 * var(--u)); color: #555; }
.exts { display: flex; align-items: center; margin-left: calc(8 * var(--u)); }
.exts span { width: calc(36 * var(--u)); display: flex; align-items: center; justify-content: center; position: relative; }
.exts svg { width: calc(16 * var(--u)); height: calc(16 * var(--u)); }
.exts b { position: absolute; left: calc(17 * var(--u)); top: calc(8 * var(--u)); min-width: calc(13 * var(--u)); height: calc(14 * var(--u)); padding: 0 2px; border-radius: 4px; background: #6b3fc4; color: #fff; font-size: calc(10 * var(--u)); line-height: calc(14 * var(--u)); text-align: center; }
.exts .bar { width: 2px; height: calc(15 * var(--u)); background: #babcbe; margin: 0 calc(8 * var(--u)); }
.mail .exts .bar { margin: 0 11px; }
.exts em { width: calc(20 * var(--u)); height: calc(20 * var(--u)); border-radius: 50%; background: #c2185b; color: #fff; font-size: calc(11 * var(--u)); line-height: calc(20 * var(--u)); text-align: center; }

/* webmail */
.owa-head { height: 63px; background: #000; display: flex; align-items: center; flex: none; }
.toolbar + .owa-head { margin-top: .9px; }
.launcher { width: 64px; height: 63px; background: #0078d7; display: flex; align-items: center; justify-content: center; color: #fff; }
.launcher svg { width: 22px; height: 21px; }
.owa-head h1 { font-weight: 400; font-size: 26.500px; color: #fff; margin-left: 25px; letter-spacing: -.03em; }
.head-icons { margin-left: auto; display: flex; height: 63px; }
.head-icons span { width: 62px; border-left: 1px solid #3c3c3c; display: flex; align-items: center; justify-content: center; padding-bottom: 2px; }
.head-icons svg { width: 22px; height: 21px; }
.avatar { width: 62px; height: 62px; margin: 0 1px 0 7px; }
.actions { height: 50px; background: #eef6fd; display: flex; align-items: center; font-size: 17.500px; color: #333; flex: none; }
.search { width: 372px; height: 50px; background: #dcebf9; display: flex; align-items: center; justify-content: space-between; padding: 0 13px 0 22px; color: #666; border-right: 1px solid #cfe0f0; letter-spacing: -.034em; font-size: 17px; }
.search svg { width: 22px; height: 22px; }
.cmds { display: grid; grid-template-columns: 29px 76px 6px 50px 24px 112px 28px 88px 158px 5px 43px 81px 111px 44px 89px 44px 30px; align-items: center; padding-left: 35px; letter-spacing: -.04em; }
.cmds .ic { width: 20px; height: 20px; }
.cmds .cv { width: 14px; height: 14px; color: #555; }
.pipe { width: 1px; height: 18px; background: #999; }
.more { display: flex; gap: 2px; }
.more i { width: 6px; height: 6px; border-radius: 3px; background: #333; }
.undo { margin-left: auto; display: flex; align-items: center; gap: 10px; color: #a6a6a6; margin-right: 32px; letter-spacing: -.03em; }
.undo svg { width: 18px; height: 18px; }
.owa-body { flex: 1; display: flex; min-height: 0; overflow: hidden; }
.folders { width: 372px; background: #f4f4f4; border-right: 1px solid #e0e0e0; padding-top: 19.500px; font-size: 17.500px; letter-spacing: -.045em; color: #444; flex: none; }
.folders div { height: 37.500px; width: 369px; display: flex; align-items: center; padding-right: 34px; }
.folders b, .folders i { margin-left: auto; font-size: 18px; }
.folders b { color: #0078d7; font-weight: 600; }
.folders i { color: #666; }
.folders svg { width: 13px; height: 13px; color: #555; }
.l0 { padding-left: 20px; }
.folders .first { padding-top: 8px; }
.l0 svg { margin-right: 10px; }
.fv { padding-left: 50px; }
.l1 { padding-left: 76px; }
.l2 { padding-left: 101px; }
.l1.sel { padding-left: 52px; background: #c7e0f4; font-weight: 600; color: #222; letter-spacing: -.045em; }
.l1.sel svg { margin-right: 11px; }
.list { width: 469px; border-right: 1px solid #e0e0e0; display: flex; flex-direction: column; flex: none; }
.list-head { height: 63px; flex: none; display: flex; align-items: center; padding: 18px 32px 0 39px; color: #0078d7; font-size: 19.500px; letter-spacing: -.02em; }
.list-head h2 { font-size: 26px; font-weight: 400; color: #333; letter-spacing: -.027em; margin-right: auto; }
.list-head svg { width: 14px; height: 14px; margin-left: 12px; }
.list-scroll { flex: 1; display: flex; min-height: 0; }
.msgs { width: 447px; overflow: hidden; }
.msg { position: relative; height: 100px; padding: 10px 10px 0 37px; color: #333; }
.msg.pinned { background: #fffbd6; }
.r1 { height: 29px; line-height: 29px; font-size: 21px; font-weight: 300; display: flex; align-items: flex-start; letter-spacing: -.03em; }
.r1 svg { width: 12px; height: 18px; margin: 4px 5px 0 0; }
.r1 svg + svg { margin-left: 12px; }
.r1 svg:first-of-type { margin-left: auto; }
.r1 .w { width: 18px; margin-right: 1px; }
.r2 { height: 24px; line-height: 24px; display: flex; justify-content: space-between; font-size: 15px; letter-spacing: -.02em; }
.r2 span { width: 299px; overflow: hidden; }
.r2 time { color: #666; line-height: 26px; letter-spacing: -.045em; }
.msg p { line-height: 25px; font-size: 15.500px; color: #666; letter-spacing: -.052em; }
.unread .r2, .unread .r2 time { color: #0072d0; font-weight: 600; letter-spacing: -.035em; }
.unread .r2 .wide { letter-spacing: -.01em; }
.unread::before { content: ""; position: absolute; left: 0; top: 0; width: 4px; height: 99px; background: #2b88d8; }
.msg.cur { background: #c7e0f4; }
.cb { position: absolute; left: 13px; top: 14px; width: 17px; height: 18px; background: #fff; border: 1px solid #c0c0c0; }
.day { height: 38px; line-height: 37px; padding-left: 39px; font-size: 15.500px; font-weight: 600; color: #0072d0; border-bottom: 1px solid #ddd; letter-spacing: -.04em; }
.cur + .day { height: 37px; }
.sb { display: flex; flex-direction: column; align-items: center; color: #c6cacc; }
.sb svg { width: 10px; height: 8px; }
.sb span { width: 8px; border-radius: 4px; background: #c2c4c6; }
.sb .dn { margin-top: auto; }
.sb-list { width: 21px; padding: 7px 0 6px; }
.sb-list span { height: 48px; margin-top: 14px; }
.reader { flex: 1; display: flex; min-width: 0; }
.quote { margin-left: 98px; width: 960px; height: 738px; border-left: 2px solid #c6c6c6; padding-left: 12px; color: #222; overflow: hidden; }
.hdr { font-size: 16px; line-height: 27px; letter-spacing: .006em; }
.hdr.cut { margin-top: -22px; height: 29px; }
.hdr b { font-weight: 700; letter-spacing: -.03em; }
.quote pre { font: 20px/27px "Lucida Console", "DejaVu Sans Mono", monospace; color: #222; margin-top: -1px; }
.quote pre i { color: #000; -webkit-text-stroke: .4px #000; }
.quote pre b { letter-spacing: .33px; }
mark { background: #c8c8c8; color: #333; display: inline-block; height: 27px; line-height: 31px; margin-top: -2px; vertical-align: top; }
.sig { font-family: "Comic Sans MS", "Noto Sans", sans-serif; font-size: 20px; line-height: 28px; }
.sig p { width: max-content; }
.dash { height: 27px; }
.s1, .s2, .s3, .s4 { font-weight: 700; }
.s1 { letter-spacing: .03em; }
.s2 { color: #38761d; letter-spacing: -.006em; }
.s3 { color: #ff9900; letter-spacing: -.012em; }
.s4 { color: #00e; text-decoration: underline; letter-spacing: -.022em; }
.s5 { color: #333; letter-spacing: .028em; }
.sb-read { margin-left: auto; width: 8px; margin-right: 7px; padding: 7px 0 6px; }
.sb-read span { height: 389px; margin-top: 366px; }

/* taskbar */
.task { height: 60px; background: #222; border-top: 1px solid #4a4a4a; display: flex; align-items: center; position: relative; color: #fff; flex: none; }
.mail .task { background: linear-gradient(90deg, #1c2422, #222 120px); }
.weather { width: 361px; padding-left: 28px; position: relative; }
.weather svg { width: 34px; height: 30px; }
.weather b { position: absolute; left: 41px; top: -3px; background: #2a2a2a; border-radius: 4px; font-size: 13px; line-height: 17px; font-weight: 400; padding: 0 0 0 5px; letter-spacing: -.05em; }
.apps { display: flex; height: 100%; align-items: center; }
.apps span { width: 55px; height: 50px; display: flex; align-items: center; justify-content: center; position: relative; border-radius: 5px; }
.apps span svg { width: 29px; height: 29px; }
.run::after, .act::after { content: ""; position: absolute; bottom: 1px; width: 8px; height: 4px; border-radius: 2px; background: #9a9a9a; }
.act { background: linear-gradient(#353535, #353535) center / 49px 100% no-repeat; }
.act::after { width: 20px; background: #d9a0e0; }
.tray { margin-left: auto; display: flex; align-items: center; font-size: 15px; line-height: 20px; letter-spacing: -.04em; }
.tup { width: 16px; height: 16px; }
.lang { text-align: center; margin: 0 22px 0 26px; width: 28px; }
.ti { width: 20px; height: 20px; margin-right: 10px; }
.clock { text-align: right; width: 85px; }
.tbell { width: 16px; height: 20px; margin: 0 31px 0 7px; }
.tcop { width: 28px; height: 30px; margin-right: 26px; }
.social .task { height: 48px; background: linear-gradient(90deg, #222 0, #241f2e 150px, #251f38 400px, #2d1c3c 560px, #421a38 760px, #3a2119 930px, #33251a 980px, #4a1620 1130px, #4c1613 1280px, #3e1a14 1500px, #2d1c18 1750px, #2f1d20); }
.social .weather { width: 431px; padding-left: 18px; display: flex; align-items: center; gap: 7px; font-size: 12px; line-height: 16px; letter-spacing: -.02em; color: #e8e8e8; }
.social .weather svg { width: 25px; height: 24px; }
.social .apps span { width: 44px; height: 40px; }
.social .apps span svg { width: 24px; height: 24px; }
.social .run::after { width: 6px; height: 3px; bottom: -2px; }
.social .act { background: linear-gradient(#fff1, #fff1) center / 38px 100% no-repeat; }
.social .act::after { width: 16px; height: 3px; bottom: -1px; }
.pill { width: 220px; height: 32px; margin: 0 2px 0 3px; border-radius: 16px; background: #ffffff20; border: 1px solid #ffffff25; display: flex; align-items: center; padding: 0 3px 0 11px; font-size: 14px; color: #d8d8d8; letter-spacing: -.03em; }
.pill svg { width: 16px; height: 20px; margin-right: 10px; }
.pill .mt { width: 48px; height: 25px; margin: 3px 0 0 auto; }
.social .tray { font-size: 12px; line-height: 16px; letter-spacing: -.02em; color: #ddd; }
.social .tcop { width: 23px; height: 24px; margin: 0 19px 0 20px; }

/* e-Social */
.viewport { flex: 1; min-height: 0; display: flex; font-family: Arial, "Liberation Sans", sans-serif; }
.site-page { width: 1903px; display: flex; flex-direction: column; }
.es-head { height: 44px; background: #2fa83a; border-bottom: 1px solid #e6e6e6; display: flex; align-items: center; padding: 0 135px 7px 132px; color: #fff; flex: none; }
.logo { width: 50px; height: 20px; border-radius: 50%; background: #dcefdc; box-shadow: 0 0 4px 1px #dcefdc; display: flex; flex-direction: column; align-items: center; }
.logo small { font-size: 5px; line-height: 6px; color: #e88a2a; letter-spacing: -.02em; }
.logo b { font: italic bold 14px/13px "Liberation Serif", serif; color: #2f9a3c; }
.es-head h1 { font-size: 18px; font-weight: 400; margin-left: 9px; margin-right: auto; }
.user { display: flex; align-items: center; height: 40px; font-size: 14px; letter-spacing: -.035em; padding-top: 2px; border-left: 1px solid #5fc06a; }
.user svg { width: 21px; height: 20px; margin-right: 5px; }
.u1 { width: 181px; padding-left: 20px; }
.u2 { padding-left: 19px; }
.user .caret { width: 9px; height: 5px; margin: 3px 0 0 5px; }
.es-body { flex: 1; display: flex; min-height: 0; }
aside { width: 241px; margin-left: 112px; background: #eee; border: solid #ccc; border-width: 0 1px; display: flex; flex-direction: column; font-size: 13px; color: #333; }
.date { height: 51px; line-height: 45px; text-align: center; position: relative; border-bottom: 1px solid #c8c8c8; }
.tog { position: absolute; right: 6px; top: 1px; width: 14px; height: 10px; background: linear-gradient(#999 0 2px, #eee 2px 3px, #999 3px); }
aside ul { list-style: none; border-bottom: 1px solid #c8c8c8; }
aside li { height: 35px; background: #e0e0e0; border-top: 1px solid #f4f4f4; display: flex; align-items: center; padding-left: 14px; color: #222; }
aside li svg { width: 13px; height: 12px; margin-right: 4px; }
.copy { margin: auto auto 11px 31px; width: 178px; height: 89px; background: #fff; border: 1px solid #e0e0e0; border-radius: 6px; text-align: center; font-size: 11px; line-height: 26px; color: #111; padding-top: 5px; }
.es-body main { width: 1439px; border-right: 1px solid #ccc; padding: 20px 30px 0; color: #333; }
.crumbs { height: 33px; border: 1px solid #e5e5e5; border-radius: 4px; background: linear-gradient(#fff, #f4f4f4); display: flex; align-items: center; padding-left: 11px; font-size: 12px; }
.crumbs svg { width: 13px; height: 12px; margin-right: 10px; }
.crumbs a, .crumbs span { border-left: 1px solid #e4e4e4; padding: 2px 8px 2px 7px; color: #2c6e49; }
.crumbs span { color: #222; }
.es-body h2 { font-size: 18px; font-weight: 400; height: 53px; padding-top: 23px; border-bottom: 1px solid #ddd; color: #333; }
fieldset { margin-top: 29px; border: 1px solid #3fae7a; border-radius: 4px; height: 241px; padding: 25px 72px 0; font-size: 13px; color: #222; }
legend { font-size: 14px; font-weight: 700; color: #3fae7a; height: 18px; line-height: 18px; margin-left: -72px; }
.req { color: #f00; text-align: right; height: 23px; line-height: 16px; }
.frow { display: grid; grid-template-columns: 129px 12px 440px 179px 32px 440px; height: 40px; line-height: 29px; }
.frow .rl { padding-left: 6px; }
.frow s { color: #f00; }
.inp { height: 34px; border: 1px solid #ccc; border-radius: 4px; padding: 0 12px; font-size: 14px; line-height: 32px; color: #555; box-shadow: inset 0 1px 1px #0001; overflow: hidden; }
.inp span { display: block; overflow: hidden; }
.frow.last { line-height: 18px; height: 47px; }
.chk { margin-top: 6px; border-top: 1px solid #eee; height: 35px; }
.chk svg { width: 34px; height: 34px; margin: 0 auto; }
.btns { display: flex; justify-content: flex-end; gap: 3px; }
.btns button { height: 34px; padding: 0 12px; border: 1px solid #ccc; border-radius: 4px; background: #fff; font: 14px Arial, "Liberation Sans", sans-serif; color: #333; }
.btns .ok { background: #5cb85c; border-color: #4cae4c; color: #fff; }
.vsb { width: 17px; background: #f1f1f1; display: flex; flex-direction: column; align-items: center; color: #a3a3a3; }
.vsb svg { width: 8px; height: 6px; margin: 6px 0 5px; }
.vsb span { width: 13px; height: 894px; background: #c1c1c1; }
.vsb .dk { margin-top: auto; margin-bottom: 7px; color: #505050; }
```
